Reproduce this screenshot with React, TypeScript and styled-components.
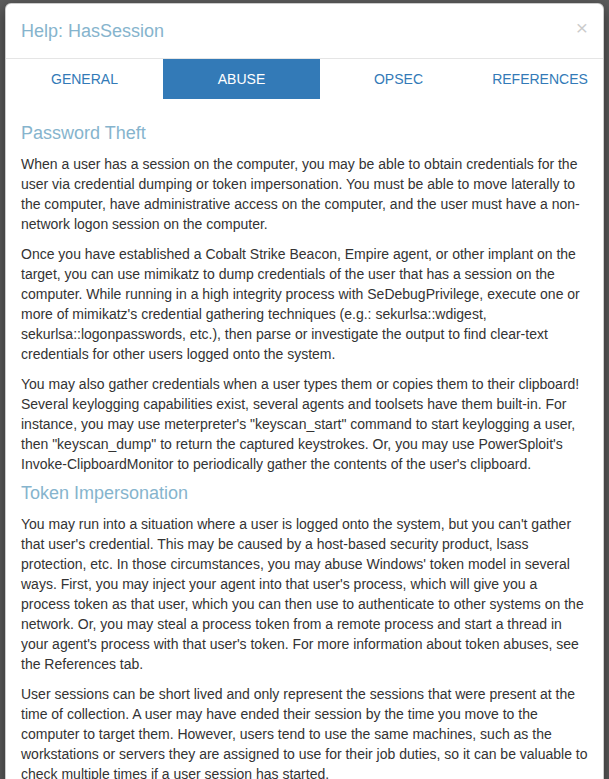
import React, { useState } from "react";
import styled, { createGlobalStyle } from "styled-components";

const Global = createGlobalStyle`
  html, body { margin: 0; padding: 0; background: #5c5c5c; }
  body { font-family: "Liberation Sans", Arial, Helvetica, sans-serif; overflow: hidden; }
  * { box-sizing: border-box; }
`;

const Backdrop = styled.div`
  width: 609px;
  height: 779px;
  overflow: hidden;
  padding: 3px 0 0 5px;
`;

const Modal = styled.div`
  width: 599px;
  background: #fff;
  border: 1px solid rgba(0, 0, 0, 0.2);
  border-radius: 6px;
  box-shadow: 0 5px 15px rgba(0, 0, 0, 0.5);
  min-height: 900px;
`;

const Header = styled.div`
  display: flex;
  align-items: center;
  justify-content: space-between;
  height: 55px;
  padding: 0 15px;
  border-bottom: 1px solid #e5e5e5;
`;

const Title = styled.h4`
  margin: 0;
  font-size: 18px;
  font-weight: 400;
  line-height: 25px;
  color: #86b4cd;
`;

const Close = styled.button`
  border: 0;
  background: transparent;
  padding: 0;
  font-family: "Liberation Sans", Arial, sans-serif;
  font-size: 21px;
  font-weight: 400;
  line-height: 1;
  color: #000;
  opacity: 0.2;
  margin-top: -7px;
  cursor: pointer;
`;

const Tabs = styled.div`
  display: grid;
  grid-template-columns: 157px 157px 157px 1fr;
`;

const Tab = styled.div<{ $active?: boolean }>`
  height: 40px;
  display: flex;
  align-items: center;
  justify-content: center;
  font-size: 14px;
  text-transform: uppercase;
  color: ${(p) => (p.$active ? "#fff" : "#337ab7")};
  background: ${(p) => (p.$active ? "#337ab7" : "transparent")};
  cursor: pointer;
`;

const Body = styled.div`
  padding: 15px;
  color: #333;
  font-size: 14px;
  line-height: 20px;
`;

const Heading = styled.h4`
  margin: 10px 0;
  font-size: 18px;
  font-weight: 400;
  line-height: 1.1;
  color: #86b4cd;
`;

const Para = styled.p`
  margin: 0 0 10px;
`;

const tabs = ["General", "Abuse", "Opsec", "References"];

export default function App() {
  const [active, setActive] = useState("Abuse");
  return (
    <>
      <Global />
      <Backdrop>
        <Modal>
          <Header>
            <Title>Help: HasSession</Title>
            <Close aria-label="Close">×</Close>
          </Header>
          <Tabs>
            {tabs.map((t) => (
              <Tab key={t} $active={t === active} onClick={() => setActive(t)}>
                {t}
              </Tab>
            ))}
          </Tabs>
          <Body>
            <Heading>Password Theft</Heading>
            <Para>
              When a user has a session on the computer, you may be able to obtain credentials for the user via
              credential dumping or token impersonation. You must be able to move laterally to the computer, have
              administrative access on the computer, and the user must have a non-network logon session on the
              computer.
            </Para>
            <Para>
              Once you have established a Cobalt Strike Beacon, Empire agent, or other implant on the target, you can
              use mimikatz to dump credentials of the user that has a session on the computer. While running in a high
              integrity process with SeDebugPrivilege, execute one or more of mimikatz's credential gathering
              techniques (e.g.: sekurlsa::wdigest, sekurlsa::logonpasswords, etc.), then parse or investigate the
              output to find clear-text credentials for other users logged onto the system.
            </Para>
            <Para>
              You may also gather credentials when a user types them or copies them to their clipboard! Several
              keylogging capabilities exist, several agents and toolsets have them built-in. For instance, you may use
              meterpreter's "keyscan_start" command to start keylogging a user, then "keyscan_dump" to return the
              captured keystrokes. Or, you may use PowerSploit's Invoke-ClipboardMonitor to periodically gather the
              contents of the user's clipboard.
            </Para>
            <Heading>Token Impersonation</Heading>
            <Para>
              You may run into a situation where a user is logged onto the system, but you can't gather that user's
              credential. This may be caused by a host-based security product, lsass protection, etc. In those
              circumstances, you may abuse Windows' token model in several ways. First, you may inject your agent into
              that user's process, which will give you a process token as that user, which you can then use to
              authenticate to other systems on the network. Or, you may steal a process token from a remote process and
              start a thread in your agent's process with that user's token. For more information about token abuses,
              see the References tab.
            </Para>
            <Para>
              User sessions can be short lived and only represent the sessions that were present at the time of
              collection. A user may have ended their session by the time you move to the computer to target them.
              However, users tend to use the same machines, such as the workstations or servers they are assigned to
              use for their job duties, so it can be valuable to check multiple times if a user session has started.
            </Para>
          </Body>
        </Modal>
      </Backdrop>
    </>
  );
}
